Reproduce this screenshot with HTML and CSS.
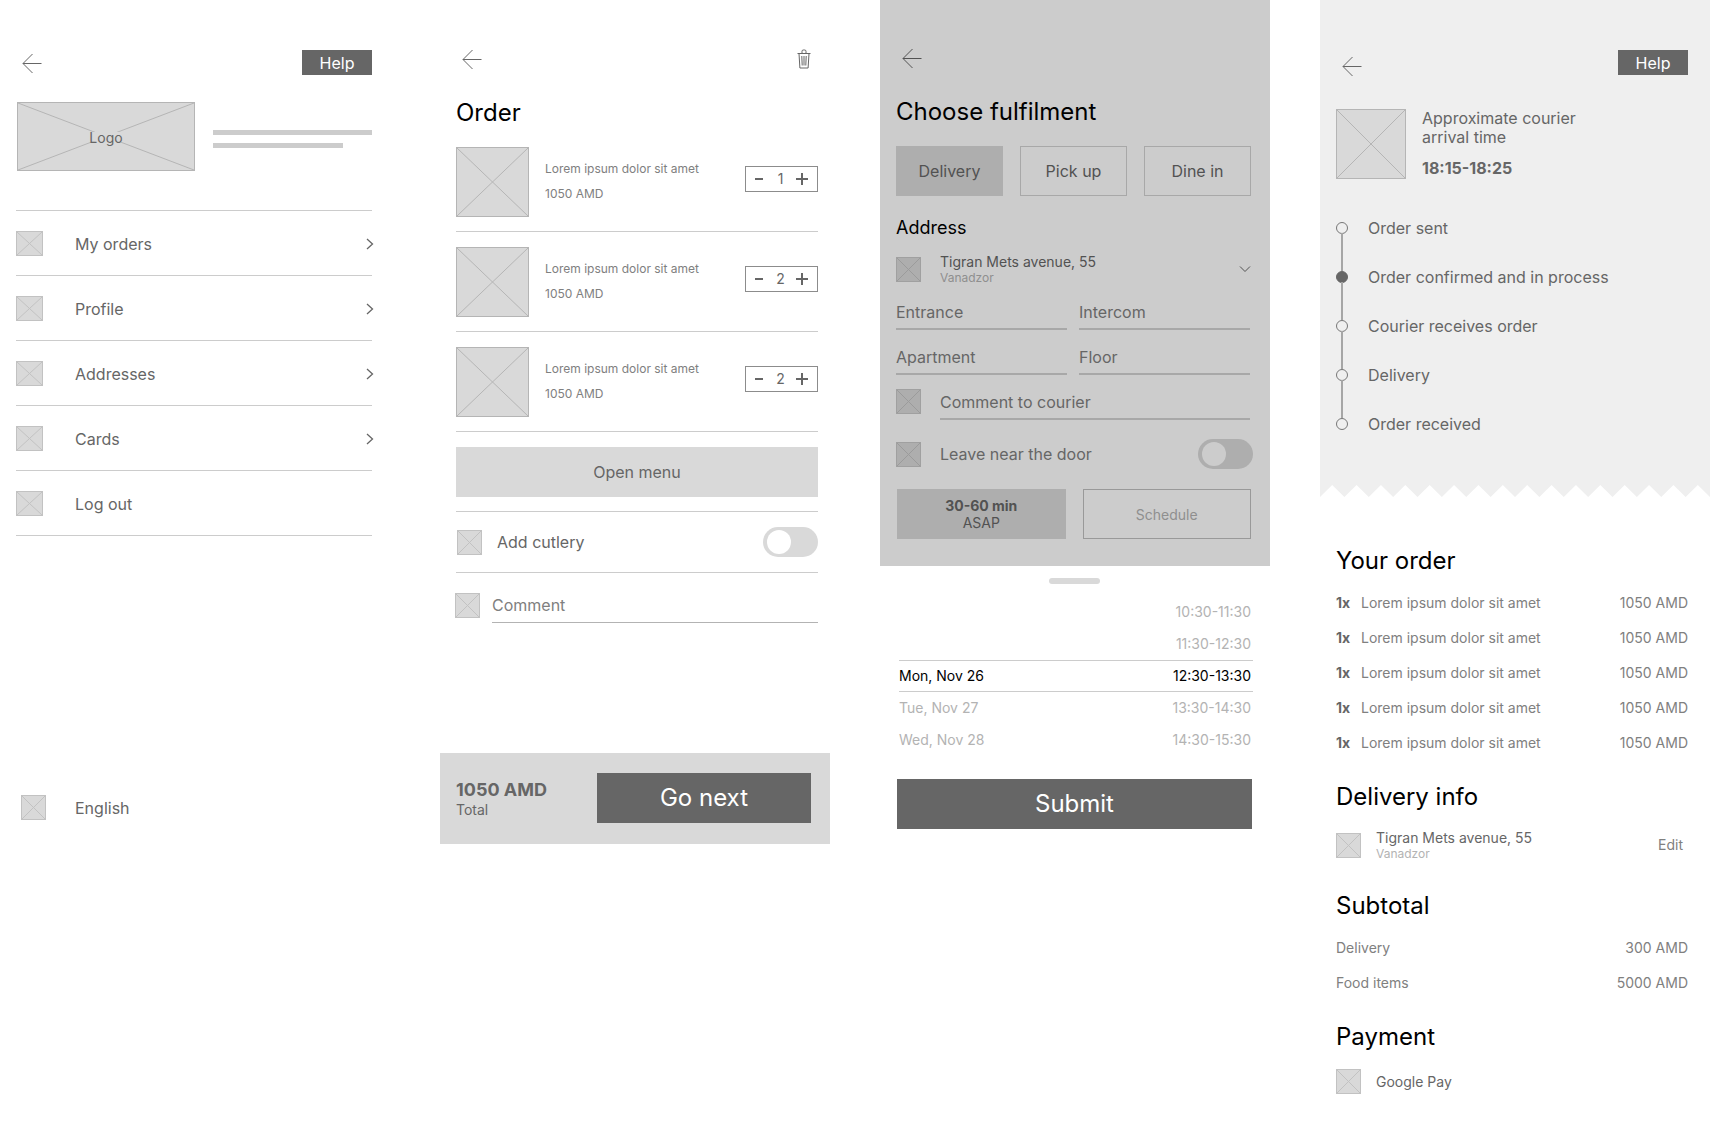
FILE: index.html
```html
<!DOCTYPE html>
<html lang="en">
<head>
<meta charset="utf-8">
<meta name="viewport" content="width=device-width, initial-scale=1">
<title>Food delivery wireframes</title>
<link rel="stylesheet" href="styles.css">
</head>
<body>
<svg class="symbols" aria-hidden="true">
  <symbol id="cross"><line x1="0" y1="0" x2="100%" y2="100%"/><line x1="0" y1="100%" x2="100%" y2="0"/></symbol>
  <symbol id="back" viewBox="0 0 20 20"><path d="M10.500 1 1 10.500 10.500 20M1 10.500H19.500"/></symbol>
  <symbol id="next" viewBox="0 0 8 12"><path d="m1 1 5.500 5L1 11"/></symbol>
  <symbol id="down" viewBox="0 0 12 8"><path d="m1 1.500 5 5 5-5"/></symbol>
</svg>
<main class="board">

  <section class="screen menu">
    <header class="topbar">
      <button class="icon-button" aria-label="Back"><svg class="back"><use href="#back"/></svg></button>
      <button class="help">Help</button>
    </header>
    <div class="brand">
      <div class="logo"><svg class="box logo-box"><use href="#cross"/></svg><span class="logo-text">Logo</span></div>
      <div class="brand-lines"><span class="bar"></span><span class="bar bar-short"></span></div>
    </div>
    <nav>
      <ul class="menu-list">
        <li><a href="#orders" class="menu-link"><svg class="box menu-icon"><use href="#cross"/></svg><span class="grow">My orders</span><svg class="next"><use href="#next"/></svg></a></li>
        <li><a href="#profile" class="menu-link"><svg class="box menu-icon"><use href="#cross"/></svg><span class="grow">Profile</span><svg class="next"><use href="#next"/></svg></a></li>
        <li><a href="#addresses" class="menu-link"><svg class="box menu-icon"><use href="#cross"/></svg><span class="grow">Addresses</span><svg class="next"><use href="#next"/></svg></a></li>
        <li><a href="#cards" class="menu-link"><svg class="box menu-icon"><use href="#cross"/></svg><span class="grow">Cards</span><svg class="next"><use href="#next"/></svg></a></li>
        <li><a href="#logout" class="menu-link"><svg class="box menu-icon"><use href="#cross"/></svg><span class="grow">Log out</span></a></li>
      </ul>
    </nav>
    <a href="#language" class="language"><svg class="box small"><use href="#cross"/></svg>English</a>
  </section>

  <section class="screen order">
    <div class="order-body">
      <header class="topbar">
        <button class="icon-button" aria-label="Back"><svg class="back"><use href="#back"/></svg></button>
        <button class="icon-button trash-button" aria-label="Clear order">
          <svg class="trash" viewBox="0 0 14 20"><path d="M.500 4.500h13M2 4.500l.900 14.500h8.200L12 4.500M5 4V2.300Q5 1 6.300 1h1.400Q9 1 9 2.300V4M4.800 7l.400 9.500M7 7v9.500M9.200 7l-.400 9.500"/></svg>
        </button>
      </header>
      <h1 class="title order-title">Order</h1>
      <ul class="cart">
        <li class="cart-item">
          <svg class="box thumb"><use href="#cross"/></svg>
          <div class="cart-text"><p>Lorem ipsum dolor sit amet</p><p>1050 AMD</p></div>
          <div class="stepper"><button class="step" aria-label="Less"><svg class="sign minus" viewBox="0 0 12 12"><path d="M2 6h8"/></svg></button><span>1</span><button class="step" aria-label="More"><svg class="sign" viewBox="0 0 12 12"><path d="M0 6h12M6 0v12"/></svg></button></div>
        </li>
        <li class="cart-item">
          <svg class="box thumb"><use href="#cross"/></svg>
          <div class="cart-text"><p>Lorem ipsum dolor sit amet</p><p>1050 AMD</p></div>
          <div class="stepper"><button class="step" aria-label="Less"><svg class="sign minus" viewBox="0 0 12 12"><path d="M2 6h8"/></svg></button><span>2</span><button class="step" aria-label="More"><svg class="sign" viewBox="0 0 12 12"><path d="M0 6h12M6 0v12"/></svg></button></div>
        </li>
        <li class="cart-item">
          <svg class="box thumb"><use href="#cross"/></svg>
          <div class="cart-text"><p>Lorem ipsum dolor sit amet</p><p>1050 AMD</p></div>
          <div class="stepper"><button class="step" aria-label="Less"><svg class="sign minus" viewBox="0 0 12 12"><path d="M2 6h8"/></svg></button><span>2</span><button class="step" aria-label="More"><svg class="sign" viewBox="0 0 12 12"><path d="M0 6h12M6 0v12"/></svg></button></div>
        </li>
      </ul>
      <button class="open-menu">Open menu</button>
      <div class="cutlery">
        <svg class="box small"><use href="#cross"/></svg>
        <label class="grow" for="cutlery">Add cutlery</label>
        <input class="toggle" type="checkbox" id="cutlery">
      </div>
      <div class="comment">
        <svg class="box small"><use href="#cross"/></svg>
        <input class="field" type="text" placeholder="Comment" aria-label="Comment">
      </div>
    </div>
    <footer class="checkout">
      <div class="total"><strong class="total-sum">1050 AMD</strong><span class="total-label">Total</span></div>
      <button class="primary go-next">Go next</button>
    </footer>
  </section>

  <section class="screen fulfilment">
    <div class="shade">
      <header class="topbar">
        <button class="icon-button" aria-label="Back"><svg class="back"><use href="#back"/></svg></button>
      </header>
      <h1 class="title shade-title">Choose fulfilment</h1>
      <div class="modes">
        <button class="choice selected" aria-pressed="true">Delivery</button>
        <button class="choice">Pick up</button>
        <button class="choice">Dine in</button>
      </div>
      <h2 class="subtitle">Address</h2>
      <button class="address-picker">
        <svg class="box small"><use href="#cross"/></svg>
        <span class="address grow"><span class="street">Tigran Mets avenue, 55</span><span class="city">Vanadzor</span></span>
        <svg class="down"><use href="#down"/></svg>
      </button>
      <div class="fields">
        <input class="field" type="text" placeholder="Entrance" aria-label="Entrance">
        <input class="field" type="text" placeholder="Intercom" aria-label="Intercom">
        <input class="field" type="text" placeholder="Apartment" aria-label="Apartment">
        <input class="field" type="text" placeholder="Floor" aria-label="Floor">
      </div>
      <div class="courier-note">
        <svg class="box small"><use href="#cross"/></svg>
        <input class="field" type="text" placeholder="Comment to courier" aria-label="Comment to courier">
      </div>
      <div class="door">
        <svg class="box small"><use href="#cross"/></svg>
        <label class="grow" for="door">Leave near the door</label>
        <input class="toggle" type="checkbox" id="door">
      </div>
      <div class="when">
        <button class="choice small-text selected" aria-pressed="true"><strong>30-60 min</strong><span>ASAP</span></button>
        <button class="choice small-text schedule">Schedule</button>
      </div>
    </div>
    <div class="sheet">
      <div class="handle"></div>
      <ul class="slots">
        <li class="slot"><span></span><span>10:30-11:30</span></li>
        <li class="slot"><span></span><span>11:30-12:30</span></li>
        <li class="slot slot-current"><span>Mon, Nov 26</span><span>12:30-13:30</span></li>
        <li class="slot"><span>Tue, Nov 27</span><span>13:30-14:30</span></li>
        <li class="slot"><span>Wed, Nov 28</span><span>14:30-15:30</span></li>
      </ul>
      <button class="primary submit">Submit</button>
    </div>
  </section>

  <section class="screen status">
    <div class="progress">
      <header class="topbar">
        <button class="icon-button" aria-label="Back"><svg class="back"><use href="#back"/></svg></button>
        <button class="help">Help</button>
      </header>
      <div class="arrival">
        <svg class="box square"><use href="#cross"/></svg>
        <div><p>Approximate courier<br>arrival time</p><p class="arrival-time">18:15-18:25</p></div>
      </div>
      <ol class="steps">
        <li>Order sent</li>
        <li class="done">Order confirmed and in process</li>
        <li>Courier receives order</li>
        <li>Delivery</li>
        <li>Order received</li>
      </ol>
    </div>
    <svg class="zigzag" viewBox="0 0 32 1" preserveAspectRatio="none" aria-hidden="true"><path d="M0 0V1L1 0 2 1 3 0 4 1 5 0 6 1 7 0 8 1 9 0 10 1 11 0 12 1 13 0 14 1 15 0 16 1 17 0 18 1 19 0 20 1 21 0 22 1 23 0 24 1 25 0 26 1 27 0 28 1 29 0 30 1 31 0 32 1V0Z"/></svg>
    <div class="receipt">
      <h2 class="title">Your order</h2>
      <table class="lines">
        <tr><th class="qty">1x</th><td>Lorem ipsum dolor sit amet</td><td class="price">1050 AMD</td></tr>
        <tr><th class="qty">1x</th><td>Lorem ipsum dolor sit amet</td><td class="price">1050 AMD</td></tr>
        <tr><th class="qty">1x</th><td>Lorem ipsum dolor sit amet</td><td class="price">1050 AMD</td></tr>
        <tr><th class="qty">1x</th><td>Lorem ipsum dolor sit amet</td><td class="price">1050 AMD</td></tr>
        <tr><th class="qty">1x</th><td>Lorem ipsum dolor sit amet</td><td class="price">1050 AMD</td></tr>
      </table>
      <h2 class="title section-title">Delivery info</h2>
      <div class="info-row delivery-row">
        <svg class="box small"><use href="#cross"/></svg>
        <div class="address grow"><span class="street">Tigran Mets avenue, 55</span><span class="city">Vanadzor</span></div>
        <a href="#edit" class="edit">Edit</a>
      </div>
      <h2 class="title subtotal-title">Subtotal</h2>
      <table class="lines">
        <tr><td>Delivery</td><td class="price">300 AMD</td></tr>
        <tr><td>Food items</td><td class="price">5000 AMD</td></tr>
      </table>
      <h2 class="title section-title">Payment</h2>
      <div class="info-row"><svg class="box small"><use href="#cross"/></svg><span class="street">Google Pay</span></div>
    </div>
  </section>
</main>
</body>
</html>
```
FILE: styles.css
```css
*,
*::before,
*::after {
  box-sizing: border-box;
  margin: 0;
  padding: 0;
}

body {
  background: #fff;
  color: #666;
  font: 16px/20px Inter, "Liberation Sans", sans-serif;
}

ul,
ol {
  list-style: none;
}

a {
  color: inherit;
  text-decoration: none;
}

button,
input {
  font: inherit;
  color: inherit;
  background: none;
  border: 0;
  border-radius: 0;
}

svg {
  display: block;
  flex: none;
  fill: none;
  stroke: #666;
}

.symbols {
  position: absolute;
  width: 0;
  height: 0;
}

.board {
  display: grid;
  grid-template-columns: repeat(4, minmax(0, 1fr));
  gap: 50px;
  align-items: start;
}

.grow {
  flex: 1;
}

/* Placeholder boxes */
.box {
  background: #d9d9d9;
  border: 1px solid #c2c2c2;
  stroke: #c2c2c2;
}

.small {
  width: 25px;
  height: 25px;
}

.thumb {
  width: 73px;
  height: 70px;
  border-color: #b5b5b5;
  stroke: #b5b5b5;
}

.square {
  width: 70px;
  height: 70px;
  border-color: #b5b5b5;
  stroke: #b5b5b5;
}

/* Shared pieces */
.topbar {
  display: flex;
  justify-content: space-between;
  align-items: center;
}

.icon-button {
  display: flex;
  padding: 0 6px;
}

.back {
  width: 20px;
  height: 20px;
}

.help {
  width: 70px;
  height: 25px;
  background: #666;
  color: #fff;
}

.title {
  color: #000;
  font-size: 24px;
  line-height: 30px;
  font-weight: 400;
}

.primary {
  height: 50px;
  background: #666;
  color: #fff;
  font-size: 24px;
  line-height: 30px;
}

.field {
  display: block;
  width: 100%;
  min-width: 0;
  padding-bottom: 7px;
  border-bottom: 1px solid #b3b3b3;
  outline: 0;
}

.field::placeholder {
  color: #808080;
  opacity: 1;
}

.toggle {
  appearance: none;
  display: flex;
  align-items: center;
  width: 55px;
  height: 30px;
  padding: 0 4px;
  border-radius: 15px;
  background: #d9d9d9;
}

.toggle::before {
  content: "";
  width: 24px;
  height: 24px;
  border-radius: 50%;
  background: #fff;
}

.toggle:checked {
  justify-content: flex-end;
}

.address {
  display: flex;
  flex-direction: column;
}

.street {
  font-size: 14px;
  line-height: 17px;
}

.city {
  color: #b3b3b3;
  font-size: 12px;
  line-height: 15px;
}

/* Menu screen */
.menu {
  padding: 50px 18px 0 16px;
}

.brand {
  display: flex;
  gap: 18px;
  margin: 27px 0 39px 1px;
}

.logo {
  display: grid;
  flex: none;
  place-items: center;
}

.logo > * {
  grid-area: 1 / 1;
}

.logo-box {
  width: 178px;
  height: 69px;
  border-color: #b5b5b5;
  stroke: #b5b5b5;
}

.logo-text {
  z-index: 1;
  padding-top: 2px;
  background: #d9d9d9;
  font-size: 14px;
  line-height: 8px;
}

.brand-lines {
  display: flex;
  flex: 1;
  flex-direction: column;
  gap: 8px;
  padding-top: 28px;
}

.bar {
  height: 5px;
  background: #ccc;
}

.bar-short {
  width: 82%;
}

.menu-list {
  border-top: 1px solid #ccc;
}

.menu-link {
  display: flex;
  align-items: center;
  height: 65px;
  padding-top: 1px;
  border-bottom: 1px solid #ccc;
}

.menu-icon {
  width: 27px;
  height: 25px;
  margin-right: 32px;
}

.next {
  width: 8px;
  height: 12px;
  margin-right: -2px;
  stroke-width: 1.3;
}

.language {
  display: flex;
  align-items: center;
  gap: 29px;
  margin: 259px 0 0 5px;
}

/* Order screen */
.order-body {
  padding: 49px 12px 0 16px;
}

.trash-button {
  padding: 0 7px;
}

.trash {
  width: 14px;
  height: 20px;
}

.order-title {
  margin: 29px 0 4px;
}

.cart-item {
  display: flex;
  align-items: center;
  height: 100px;
  border-bottom: 1px solid #ccc;
}

.cart-text {
  flex: 1;
  padding: 0 0 1px 16px;
  color: #808080;
  font-size: 12px;
  line-height: 25px;
}

.stepper {
  display: flex;
  align-items: center;
  justify-content: space-between;
  width: 73px;
  height: 26px;
  margin-bottom: 5px;
  padding: 0 9px 0 7px;
  border: 1px solid #8c8c8c;
  font-size: 14px;
}

.sign {
  width: 12px;
  height: 12px;
  stroke-width: 2px;
}

.open-menu {
  display: block;
  width: 100%;
  height: 50px;
  margin: 15px 0 14px;
  background: #d9d9d9;
}

.cutlery {
  display: flex;
  align-items: center;
  gap: 15px;
  padding: 15px 0 15px 1px;
  border: solid #ccc;
  border-width: 1px 0;
}

.comment {
  display: flex;
  gap: 12px;
  margin: 20px 0 0 -1px;
}

.comment .field {
  padding-top: 2px;
}

.checkout {
  display: flex;
  align-items: center;
  justify-content: space-between;
  margin-top: 130px;
  padding: 20px 19px 21px 16px;
  background: #d9d9d9;
}

.total {
  display: flex;
  flex-direction: column;
}

.total-sum {
  font-size: 18px;
  line-height: 22px;
}

.total-label {
  font-size: 14px;
  line-height: 17px;
}

.go-next {
  width: 214px;
}

/* Fulfilment screen */
.shade {
  padding: 48px 19px 27px 16px;
  background: #ccc;
  color: #525252;
}

.shade .box {
  background: #aeaeae;
  border-color: #a0a0a0;
  stroke: #9b9b9b;
}

.shade svg {
  stroke: #525252;
}

.shade-title {
  margin: 29px 0 19px;
}

.modes {
  display: grid;
  grid-template-columns: repeat(3, 1fr);
  gap: 17px;
}

.choice {
  height: 50px;
  border: 1px solid #a8a8a8;
}

.selected {
  background: #aeaeae;
  border-color: #aeaeae;
}

.small-text {
  display: flex;
  flex-direction: column;
  align-items: center;
  justify-content: center;
  font-size: 14px;
  line-height: 17px;
}

.schedule {
  color: #8f8f8f;
  border-color: #999;
}

.subtitle {
  margin: 21px 0 14px;
  color: #000;
  font-size: 18px;
  line-height: 22px;
  font-weight: 400;
}

.address-picker {
  display: flex;
  align-items: center;
  gap: 19px;
  width: 100%;
  text-align: left;
}

.down {
  width: 12px;
  height: 8px;
}

.shade .city {
  color: #8f8f8f;
}

.shade .field {
  padding-bottom: 6px;
  border-bottom: 2px solid #a8a8a8;
}

.shade .field::placeholder,
.door {
  color: #666;
}

.fields {
  display: grid;
  grid-template-columns: 1fr 1fr;
  gap: 17px 12px;
  margin: 17px 1px 14px 0;
}

.courier-note {
  display: flex;
  gap: 19px;
  margin-right: 1px;
}

.courier-note .field {
  padding-top: 3px;
}

.door {
  display: flex;
  align-items: center;
  gap: 19px;
  margin: 19px -2px 20px 0;
}

.shade .toggle {
  background: #aeaeae;
}

.shade .toggle::before {
  background: #ccc;
}

.when {
  display: grid;
  grid-template-columns: 1fr 1fr;
  gap: 17px;
  margin-left: 1px;
}

.sheet {
  display: flex;
  flex-direction: column;
  padding: 12px 18px 0 17px;
}

.handle {
  align-self: center;
  width: 51px;
  height: 6px;
  border-radius: 3px;
  background: #d9d9d9;
}

.slots {
  margin: 12px -1px 23px 2px;
  color: #b3b3b3;
  font-size: 14px;
}

.slot {
  display: flex;
  align-items: center;
  justify-content: space-between;
  height: 32px;
  padding-right: 2px;
}

.slot-current {
  border: solid #ccc;
  border-width: 1px 0;
  color: #000;
}

/* Status screen */
.progress {
  padding: 50px 22px 37px 16px;
  background: #efefef;
}

.progress .topbar {
  align-items: flex-start;
}

.progress .icon-button {
  padding-top: 6px;
}

.arrival {
  display: flex;
  gap: 16px;
  margin: 33px 0 24px;
  line-height: 19px;
}

.arrival-time {
  margin-top: 12px;
  font-weight: 700;
}

.steps li {
  position: relative;
  display: flex;
  align-items: center;
  gap: 20px;
  height: 49px;
}

.steps li::before {
  content: "";
  width: 12px;
  height: 12px;
  border: 1px solid #777;
  border-radius: 50%;
}

.steps .done::before {
  background: #666;
  border-color: #666;
}

/* Connector down to the next marker */
.steps li:not(:last-child)::after {
  content: "";
  position: absolute;
  top: 30px;
  left: 5px;
  width: 2px;
  height: 38px;
  background: #a6a6a6;
}

.zigzag {
  width: 100%;
  height: 12px;
  fill: #efefef;
  stroke: none;
}

.receipt {
  padding: 49px 22px 38px 16px;
}

.lines {
  width: 100%;
  margin-top: 9px;
  border-collapse: collapse;
  color: #808080;
  font-size: 14px;
}

.lines tr {
  height: 35px;
}

.qty {
  width: 25px;
  color: #666;
  text-align: left;
}

.price {
  text-align: right;
}

.section-title {
  margin: 22px 0 17px;
}

.info-row {
  display: flex;
  align-items: center;
  gap: 15px;
}

.edit {
  margin-right: 5px;
  color: #808080;
  font-size: 14px;
}

.subtotal-title {
  margin-top: 30px;
}
```
